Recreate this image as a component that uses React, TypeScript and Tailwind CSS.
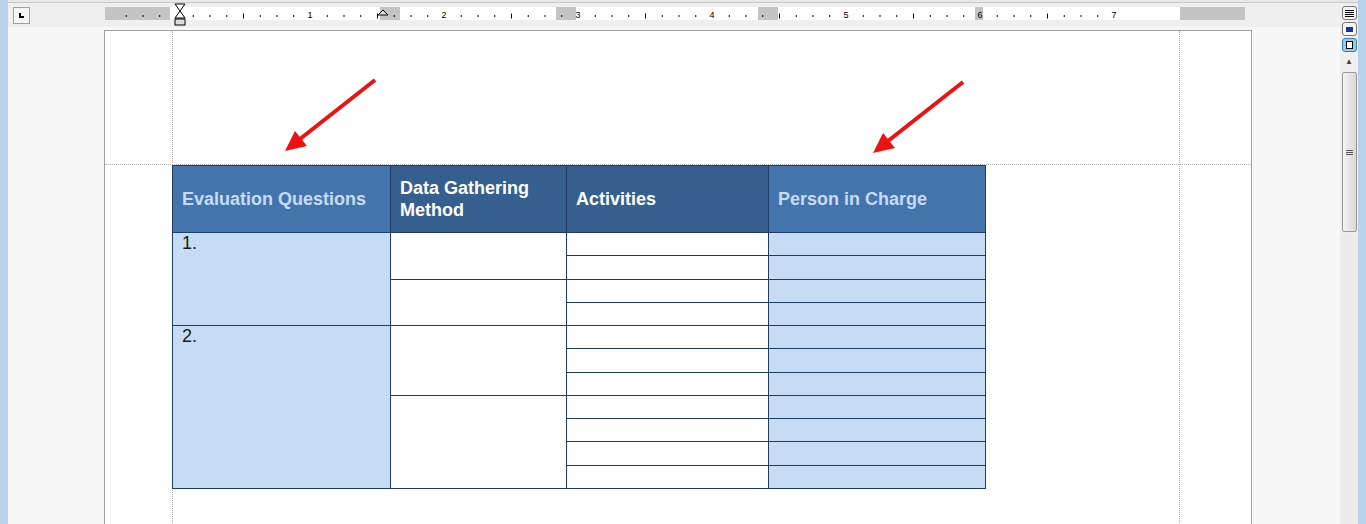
import React from "react";

const ticks: JSX.Element[] = [];
for (let i = -4; i <= 56; i++) {
  const x = 172 + i * 16.75;
  if (x < 107 || x > 1243) continue;
  const m = ((i % 8) + 8) % 8;
  if (m === 0) {
    const n = i / 8;
    if (n > 0)
      ticks.push(
        <text key={i} x={x - 101} y={15} fontSize="9" fill="#000" textAnchor="middle" fontFamily="Liberation Sans, sans-serif">
          {n}
        </text>
      );
  } else {
    const h = m === 4 ? 5 : 2;
    ticks.push(<rect key={i} x={x - 101} y={13 - h / 2} width={1} height={h} fill="#000" />);
  }
}

function HeaderCell({ text, dark, light }: { text: React.ReactNode; dark?: boolean; light?: boolean }) {
  return (
    <div
      className={`flex items-center px-[9px] font-bold text-[18px] leading-[22px] border-r border-[#1f3c64] ${
        dark ? "bg-[#345f8f] text-white" : "bg-[#4474ac]"
      } ${light ? "text-[#c6dcf5]" : ""}`}
    >
      {text}
    </div>
  );
}

export default function App() {
  const rowH = "grid-rows-[66px_repeat(11,23.27px)]";
  return (
    <div className="relative w-[1366px] h-[524px] overflow-hidden bg-[#f7f7f7]" style={{ fontFamily: "Liberation Sans, Arial, sans-serif" }}>
      <div className="absolute left-0 top-0 w-[8px] h-full bg-[#b9d1ea]" />
      <div className="absolute right-0 top-0 w-[8px] h-full bg-[#b9d1ea]" />
      {/* top bar */}
      <div className="ml-[8px] mr-[8px] h-[3px] bg-[#e8e8e8] border-b border-[#c8c8c8]" />
      <div className="flex ml-[8px] mr-[8px]">
        <div className="flex-1">
          {/* ruler row */}
          <div className="h-[24px] bg-[#efefef] flex items-center relative">
            <div className="ml-[5px] w-[17px] h-[17px] border border-[#a0a0a0] bg-[#f5f5f5] flex items-center justify-center">
              <div className="w-[5px] h-[5px] border-l-2 border-b-2 border-black" />
            </div>
            <div className="absolute left-[97px] top-[4px] w-[1140px] h-[13px] bg-white">
              <div className="absolute left-0 top-0 w-[65px] h-full bg-[#c4c4c4]" />
              <div className="absolute left-[275px] top-0 w-[20px] h-full bg-[#c4c4c4]" />
              <div className="absolute left-[451px] top-0 w-[20px] h-full bg-[#c4c4c4]" />
              <div className="absolute left-[653px] top-0 w-[20px] h-full bg-[#c4c4c4]" />
              <div className="absolute left-[870px] top-0 w-[8px] h-full bg-[#c4c4c4]" />
              <div className="absolute left-[1075px] top-0 w-[65px] h-full bg-[#c4c4c4]" />
              <svg className="absolute left-0 top-[-4px]" width="1150" height="24">
                {ticks}
                <path d="M70 1 L80 1 L75 8 L80 15 L70 15 L75 8 Z" fill="#fff" stroke="#000" />
                <rect x="70" y="16" width="10" height="6" fill="#ddd" stroke="#000" />
                <path d="M273 12 L278 7 L283 12 Z" fill="#ddd" stroke="#000" />
              </svg>
            </div>
          </div>
          {/* page area */}
          <div className="h-[3px]" />
          <div className="relative ml-[96px] mr-[88px] h-[500px] bg-white border border-[#a0a0a0]">
            <div className="absolute left-[67px] top-0 h-full border-l border-dotted border-[#b0b0b0]" />
            <div className="absolute left-[1074px] top-0 h-full border-l border-dotted border-[#b0b0b0]" />
            <div className="absolute left-0 right-0 top-[133px] border-t border-dotted border-[#b0b0b0]" />
            <div className="absolute left-[67px] top-[134px]">
              <div className={`grid grid-cols-[218px_176px_202px_217px] ${rowH} w-[814px] border border-[#1f3c64] border-r-0`}>
                <HeaderCell text="Evaluation Questions" light />
                <HeaderCell text={<span>Data Gathering<br />Method</span>} dark />
                <HeaderCell text="Activities" dark />
                <HeaderCell text="Person in Charge" light />
                {/* col1 */}
                <div className="col-start-1 row-start-2 row-span-4 bg-[#c6dcf4] border-r border-t border-[#1f3c64] px-[9px] text-[18px] leading-[20px] text-[#1a1a1a]">1.</div>
                <div className="col-start-1 row-start-6 row-span-7 bg-[#c6dcf4] border-r border-t border-[#1f3c64] px-[9px] text-[18px] leading-[20px] text-[#1a1a1a]">2.</div>
                {/* col2 */}
                <div className="col-start-2 row-start-2 row-span-2 bg-white border-r border-t border-[#1f3c64]" />
                <div className="col-start-2 row-start-4 row-span-2 bg-white border-r border-t border-[#1f3c64]" />
                <div className="col-start-2 row-start-6 row-span-3 bg-white border-r border-t border-[#1f3c64]" />
                <div className="col-start-2 row-start-9 row-span-4 bg-white border-r border-t border-[#1f3c64]" />
                {Array.from({ length: 11 }).map((_, i) => (
                  <React.Fragment key={i}>
                    <div className="col-start-3 bg-white border-r border-t border-[#1f3c64]" style={{ gridRowStart: i + 2 }} />
                    <div className="col-start-4 bg-[#c6dcf4] border-r border-t border-[#1f3c64]" style={{ gridRowStart: i + 2 }} />
                  </React.Fragment>
                ))}
              </div>
            </div>
            <svg className="absolute left-0 top-0 pointer-events-none" width="1140" height="200">
              <line x1="270" y1="49" x2="195" y2="108" stroke="#ee1111" strokeWidth="4" />
              <path d="M180 120 L190 100 L202 115 Z" fill="#ee1111" />
              <line x1="858" y1="51" x2="783" y2="110" stroke="#ee1111" strokeWidth="4" />
              <path d="M768 122 L778 102 L790 117 Z" fill="#ee1111" />
            </svg>
          </div>
        </div>
        {/* scrollbar */}
        <div className="w-[18px] flex flex-col items-center gap-[2px] pt-[3px] bg-[#efefef]">
          <div className="w-[15px] h-[14px] border border-[#777] rounded-[3px] bg-[#f5f5f5] flex flex-col items-center justify-center gap-[1px]">
            <div className="w-[9px] h-[1px] bg-black" /><div className="w-[9px] h-[1px] bg-black" /><div className="w-[9px] h-[1px] bg-black" /><div className="w-[9px] h-[1px] bg-black" />
          </div>
          <div className="w-[15px] h-[14px] border border-[#777] rounded-[3px] bg-[#f5f5f5] flex items-center justify-center">
            <div className="w-[9px] h-[7px] bg-[#1c2fa0] border border-white" />
          </div>
          <div className="w-[15px] h-[14px] border border-[#3c7fb1] rounded-[3px] bg-[#9cc9ea] flex items-center justify-center">
            <div className="w-[7px] h-[8px] border border-black bg-white" />
          </div>
          <div className="w-full h-[16px] flex items-center justify-center text-[8px] text-[#444]">▲</div>
          <div className="w-[15px] h-[160px] border border-[#999] rounded-[2px] bg-gradient-to-r from-[#f4f4f4] to-[#d8d8d8] flex items-center justify-center">
            <div className="flex flex-col gap-[1px]"><div className="w-[7px] h-[1px] bg-[#555]" /><div className="w-[7px] h-[1px] bg-[#555]" /><div className="w-[7px] h-[1px] bg-[#555]" /></div>
          </div>
          <div className="w-full flex-1 bg-[#ececec]" />
        </div>
      </div>
    </div>
  );
}
